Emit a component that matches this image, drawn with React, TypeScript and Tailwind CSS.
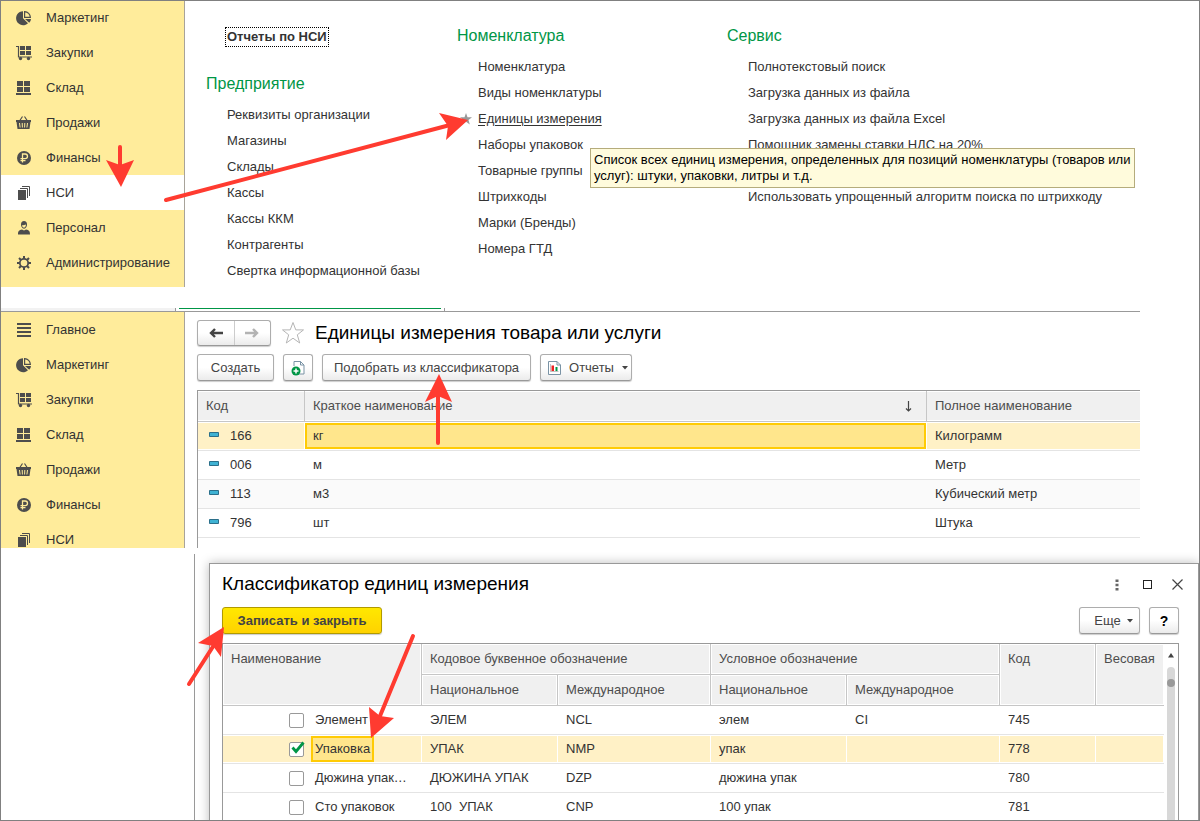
import type { ReactNode } from 'react'

const icons: Record<string, ReactNode> = {
  main: <path d="M1 2h14M1 6h14M1 10h14M1 14h14" stroke="#4d4d4d" strokeWidth="2" />,
  marketing: (
    <>
      <path d="M7 1.2v7l5 5A7 7 0 1 1 7 1.2z" fill="#4d4d4d" />
      <path d="M8.6 1.6a6 6 0 0 1 5.8 5.8H8.6z" fill="none" stroke="#4d4d4d" strokeWidth="1.2" />
      <path d="M9 9h6a6 6 0 0 1-1.8 3.8z" fill="#4d4d4d" />
    </>
  ),
  purchases: (
    <>
      <path d="M0 1.5h2.5v10.500h13.500" fill="none" stroke="#4d4d4d" strokeWidth="1.2" />
      <path d="M4 1h5v4H4zM10 1h5v4h-5zM4 6h5v4H4zM10 6h5v4h-5z" fill="#4d4d4d" />
      <circle cx="4.500" cy="13.500" r="1.700" fill="#4d4d4d" />
      <circle cx="12.500" cy="13.500" r="1.700" fill="#4d4d4d" />
    </>
  ),
  stock: <path d="M1 1h6v5H1zM8 1h6v5H8zM1 7h6v5H1zM8 7h6v5H8zM0 13h15v2H0z" fill="#4d4d4d" />,
  sales: (
    <>
      <path d="M3.500 6l3-4.500M11.500 6l-3-4.500" stroke="#4d4d4d" strokeWidth="1.200" />
      <path d="M0 5h15v2h-.5L13.500 14h-12L.5 7H0z" fill="#4d4d4d" />
      <path d="M3.500 8l.6 4.500M6.200 8l.2 4.500M8.800 8l-.2 4.500M11.500 8l-.6 4.500" stroke="#ffec9b" strokeWidth="1" />
    </>
  ),
  finance: (
    <>
      <circle cx="8" cy="8" r="7" fill="#4d4d4d" />
      <path d="M6.500 12.500V4h2.700a2.200 2.200 0 0 1 0 4.600H4.500M4.500 10.600h5" fill="none" stroke="#ffec9b" strokeWidth="1.300" />
    </>
  ),
  nsi: (
    <>
      <path d="M2 5h8v10H2z" fill="#4d4d4d" />
      <path d="M4 3.500h7.500V13M6 1.500h7.500V11" fill="none" stroke="#4d4d4d" />
    </>
  ),
  staff: (
    <>
      <path d="M5 4.500a3 3.500 0 0 1 6 0c0 2-1.200 4.200-3 4.200S5 6.500 5 4.500z" fill="#4d4d4d" />
      <path d="M6 5.200c1.500 0 3-.4 4-.8-.1 1.800-.9 3.200-2 3.200S6.200 6.600 6 5.200z" fill="#ffec9b" />
      <path d="M2 14.500c0-3.500 1-4.500 4-5l2 1 2-1c3 .5 4 1.500 4 5z" fill="#4d4d4d" />
    </>
  ),
  admin: (
    <>
      <circle cx="8" cy="8" r="4.200" fill="none" stroke="#4d4d4d" strokeWidth="1.800" />
      <path d="M8 1v3M8 12v3M1 8h3M12 8h3M3 3l2.200 2.200M10.800 10.800L13 13M3 13l2.200-2.200M10.800 5.200L13 3" stroke="#4d4d4d" strokeWidth="2" />
    </>
  ),
}

const sections = [
  { icon: 'marketing', label: 'Маркетинг' },
  { icon: 'purchases', label: 'Закупки' },
  { icon: 'stock', label: 'Склад' },
  { icon: 'sales', label: 'Продажи' },
  { icon: 'finance', label: 'Финансы' },
  { icon: 'nsi', label: 'НСИ' },
  { icon: 'staff', label: 'Персонал' },
  { icon: 'admin', label: 'Администрирование' },
]

function Sidebar({ items, active }: { items: typeof sections; active?: string }) {
  return (
    <nav className="w-[185px] shrink-0 overflow-hidden border-r border-[#a8a39a] bg-[#ffec9b]">
      {items.map((s) => (
        <a key={s.label} href="#"
          className={`flex h-[35px] items-center gap-[14px] pl-4 ${s.label === active ? 'bg-white' : ''}`}>
          <svg viewBox="0 0 16 16" className="size-4 shrink-0">{icons[s.icon]}</svg>
          {s.label}
        </a>
      ))}
    </nav>
  )
}

function LinkGroup({ title, children }: { title: string; children: ReactNode }) {
  return (
    <section>
      <h2 className="mb-1 text-base leading-7 text-[#009646]">{title}</h2>
      <ul className="pl-[21px]">{children}</ul>
    </section>
  )
}

function Item({ children }: { children: ReactNode }) {
  return <li className="h-[26px] leading-[26px] whitespace-nowrap"><a href="#">{children}</a></li>
}

const btn = 'flex items-center justify-center rounded-[3px] border border-[#adadad] border-b-[#999] bg-linear-to-b from-white from-50% to-[#ebebeb] shadow-[0_1px_1px_#ccc] text-[#444]'

function Caret() {
  return <svg viewBox="0 0 6 4" className="h-1 w-1.5"><path d="M0 0h6L3 3.500z" fill="#444" /></svg>
}

const units = [
  { code: '166', short: 'кг', full: 'Килограмм' },
  { code: '006', short: 'м', full: 'Метр' },
  { code: '113', short: 'м3', full: 'Кубический метр' },
  { code: '796', short: 'шт', full: 'Штука' },
]

function UnitsTable() {
  const th = 'h-[31px] border-b border-[#c6c6c6] p-0 text-left font-normal'
  const head = 'flex h-7 items-center bg-[#f0f0f0] px-2'
  return (
    <table className="w-full table-fixed border-separate border-spacing-0">
      <colgroup>
        <col className="w-[107px]" />
        <col className="w-[622px]" />
        <col />
      </colgroup>
      <thead className="text-[#4d4d4d]">
        <tr>
          <th className={`${th} border-r`}><div className={head}>Код</div></th>
          <th className={`${th} border-r`}>
            <div className={`${head} justify-between`}>
              Краткое наименование
              <svg viewBox="0 0 7 11" className="mr-1.5 h-[11px] w-[7px]">
                <path d="M3.500 0v10M1 7.500l2.500 2.500L6 7.500" fill="none" stroke="#444" strokeWidth="1.200" />
              </svg>
            </div>
          </th>
          <th className={th}><div className={head}>Полное наименование</div></th>
        </tr>
      </thead>
      <tbody>
        {units.map((u, i) => {
          const td = 'h-[29px] border-b border-[#e4e4e4] p-0'
          const row = i === 0 ? 'bg-[#fff1c6]' : ''
          return (
            <tr key={u.code} className={i === 2 ? 'bg-[#fafafa]' : ''}>
              <td className={td}>
                <div className={`mr-px flex h-[26px] items-center gap-[11px] pl-[11px] ${row}`}>
                  <svg viewBox="0 0 10 5" className="mb-1 h-[5px] w-[10px]">
                    <path d="M.5.5h9v4h-9z" fill="#3fb2d3" stroke="#2b6f8a" />
                  </svg>
                  {u.code}
                </div>
              </td>
              <td className={td}>
                <div className={`mr-px flex h-[26px] items-center border-2 px-1.5 ${i === 0 ? 'border-[#ffcb05] bg-[#ffe68c]' : 'border-transparent'}`}>
                  {u.short}
                </div>
              </td>
              <td className={td}>
                <div className={`flex h-[26px] items-center px-2 ${row}`}>{u.full}</div>
              </td>
            </tr>
          )
        })}
      </tbody>
    </table>
  )
}

const classifier = [
  { name: 'Элемент', nat: 'ЭЛЕМ', int: 'NCL', cond: 'элем', condInt: 'CI', code: '745' },
  { name: 'Упаковка', nat: 'УПАК', int: 'NMP', cond: 'упак', condInt: '', code: '778' },
  { name: 'Дюжина упак…', nat: 'ДЮЖИНА УПАК', int: 'DZP', cond: 'дюжина упак', condInt: '', code: '780' },
  { name: 'Сто упаковок', nat: '100  УПАК', int: 'CNP', cond: '100 упак', condInt: '', code: '781' },
]

function ClassifierTable() {
  const th = 'h-[31px] border-r border-b border-[#c6c6c6] p-0 text-left align-top font-normal'
  const head = 'm-px flex h-7 items-center bg-[#f0f0f0] px-[7px] whitespace-nowrap'
  const tall = 'm-px h-[59px] bg-[#f0f0f0] px-[7px] leading-7'
  return (
    <table className="min-w-0 flex-1 table-fixed border-separate border-spacing-0">
      <colgroup>
        <col className="w-[199px]" />
        <col className="w-[136px]" />
        <col className="w-[153px]" />
        <col className="w-[136px]" />
        <col className="w-[153px]" />
        <col className="w-[96px]" />
        <col />
      </colgroup>
      <thead className="text-[#4d4d4d]">
        <tr>
          <th rowSpan={2} className={th}><div className={tall}>Наименование</div></th>
          <th colSpan={2} className={th}><div className={head}>Кодовое буквенное обозначение</div></th>
          <th colSpan={2} className={th}><div className={head}>Условное обозначение</div></th>
          <th rowSpan={2} className={th}><div className={tall}>Код</div></th>
          <th rowSpan={2} className={`${th} border-r-0`}><div className={tall}>Весовая</div></th>
        </tr>
        <tr>
          {['Национальное', 'Международное', 'Национальное', 'Международное'].map((t, i) => (
            <th key={i} className={th}><div className={head}>{t}</div></th>
          ))}
        </tr>
      </thead>
      <tbody>
        {classifier.map((r, i) => {
          const selected = i === 1
          const td = 'h-[29px] border-b border-[#e4e4e4] p-0'
          const cell = `mr-px flex h-[26px] items-center whitespace-pre pl-2 ${selected ? 'bg-[#fff1c6]' : ''}`
          return (
            <tr key={r.code}>
              <td className={td}>
                <label className={`mr-px flex h-[26px] items-center gap-[7px] pl-[66px] ${selected ? 'bg-[#fff1c6]' : ''}`}>
                  <span className="relative size-[15px] shrink-0">
                    <input type="checkbox" defaultChecked={selected}
                      className="peer block size-[15px] appearance-none rounded-[2px] border border-[#999] bg-white" />
                    <svg viewBox="0 0 14 13" className="pointer-events-none absolute -top-px left-0.5 hidden h-[13px] w-[14px] peer-checked:block">
                      <path d="M1.500 6.500l3.500 4L12.500 1.500" fill="none" stroke="#009646" strokeWidth="2.800" />
                    </svg>
                  </span>
                  <span className={`flex h-[26px] items-center border-2 px-0.5 whitespace-nowrap ${selected ? 'border-[#ffcb05] bg-[#ffe68c]' : 'border-transparent'}`}>
                    {r.name}
                  </span>
                </label>
              </td>
              {[r.nat, r.int, r.cond, r.condInt, r.code, ''].map((v, j) => (
                <td key={j} className={td}><div className={cell}>{v}</div></td>
              ))}
            </tr>
          )
        })}
      </tbody>
    </table>
  )
}

const arrows = [
  { line: 'M120 147V166', head: '121,187 106,160 120,165 134,160' },
  { line: 'M166 200L450 125', head: '468,120 439,113 448,126 446,140' },
  { line: 'M438 443L438 396', head: '439,374 452,402 438,396 425,402' },
  { line: 'M189 684L214 645', head: '224,627 221,657 213,646 198,643' },
  { line: 'M413 636L380 716', head: '371,738 394,718 380,716 369,707' },
]

export default function App() {
  return (
    <div className="relative flex h-screen flex-col overflow-hidden bg-white font-['Liberation_Sans',Arial,sans-serif] text-[13px] text-[#333]">
      {/* Functions panel of the section */}
      <div className="flex h-[287px] shrink-0">
        <Sidebar items={sections} active="НСИ" />
        <main className="flex pl-[21px]">
          <div className="w-[251px] pt-[27px]">
            <a href="#" className="ml-[19px] inline-block border border-dotted border-black px-px leading-[18px] font-bold whitespace-nowrap">
              Отчеты по НСИ
            </a>
            <div className="pt-[23px]">
              <LinkGroup title="Предприятие">
                {['Реквизиты организации', 'Магазины', 'Склады', 'Кассы', 'Кассы ККМ', 'Контрагенты', 'Свертка информационной базы'].map((t) => (
                  <Item key={t}>{t}</Item>
                ))}
              </LinkGroup>
            </div>
          </div>
          <div className="w-[270px] pt-[22px]">
            <LinkGroup title="Номенклатура">
              <Item>Номенклатура</Item>
              <Item>Виды номенклатуры</Item>
              <li className="relative h-[26px] leading-[26px] whitespace-nowrap">
                <svg viewBox="0 0 12 12" className="absolute top-[7px] -left-[18px] size-3">
                  <path d="M6 0l1.500 4.200H12L8.500 7l1.300 4.500L6 8.800 2.200 11.500 3.500 7 0 4.200h4.500z" fill="#999" />
                </svg>
                <a href="#" className="underline underline-offset-2">Единицы измерения</a>
                <div role="tooltip"
                  className="absolute top-[42px] left-[112px] z-10 w-[545px] border border-[#b5ac7c] bg-[#fffbdc] py-[3px] pl-[3px] leading-4 whitespace-normal text-black">
                  Список всех единиц измерения, определенных для позиций номенклатуры (товаров или услуг): штуки, упаковки, литры и т.д.
                </div>
              </li>
              {['Наборы упаковок', 'Товарные группы', 'Штрихкоды', 'Марки (Бренды)', 'Номера ГТД'].map((t) => (
                <Item key={t}>{t}</Item>
              ))}
            </LinkGroup>
          </div>
          <div className="pt-[22px]">
            <LinkGroup title="Сервис">
              {['Полнотекстовый поиск', 'Загрузка данных из файла', 'Загрузка данных из файла Excel', 'Помощник замены ставки НДС на 20%'].map((t) => (
                <Item key={t}>{t}</Item>
              ))}
              <li className="pt-[26px] leading-[26px]"><a href="#">Использовать упрощенный алгоритм поиска по штрихкоду</a></li>
            </LinkGroup>
          </div>
        </main>
      </div>

      {/* Bottom edge of the open tabs */}
      <div className="mt-[21px] mr-[60px] flex h-1 shrink-0 border-b border-[#999]">
        <div className="w-[176px] border-r border-[#999] bg-[#f2f2f2]" />
        <div className="ml-[3px] h-px w-[262px] bg-[#009646]" />
        <div className="ml-[3px] flex-1 border-l border-[#999]" />
      </div>

      {/* List of units */}
      <div className="flex h-[236px] shrink-0 overflow-hidden">
        <Sidebar items={[{ icon: 'main', label: 'Главное' }, ...sections.slice(0, 6)]} />
        <main className="mr-[60px] flex flex-1 flex-col pt-2 pl-3">
          <div className="flex h-[26px] items-center">
            <div className={`${btn} h-[26px] w-[74px]`}>
              <button aria-label="Назад" className="flex h-full flex-1 items-center justify-center border-r border-[#ccc]">
                <svg viewBox="0 0 14 10" className="h-[10px] w-[14px]">
                  <path d="M14 5H2M6 1L2 5l4 4" fill="none" stroke="#444" strokeWidth="2.400" />
                </svg>
              </button>
              <button aria-label="Вперед" className="flex h-full flex-1 items-center justify-center">
                <svg viewBox="0 0 14 10" className="h-[10px] w-[14px]">
                  <path d="M0 5h12M8 1l4 4-4 4" fill="none" stroke="#b3b3b3" strokeWidth="2.400" />
                </svg>
              </button>
            </div>
            <svg viewBox="0 0 24 24" className="ml-[10px] size-6">
              <path d="M12 1.500l2.800 7.400h7.700l-6.200 4.900 2.400 8.200L12 17.200 5.300 22l2.400-8.200-6.200-4.900h7.700z" fill="white" stroke="#b5b5b5" />
            </svg>
            <h1 className="ml-[10px] text-[19px] whitespace-nowrap text-black">Единицы измерения товара или услуги</h1>
          </div>
          <div className="mt-2 flex h-[27px] shrink-0">
            <button className={`${btn} w-[77px]`}>Создать</button>
            <button aria-label="Создать копированием" className={`${btn} ml-[9px] w-[30px]`}>
              <svg viewBox="0 0 16 16" className="size-4">
                <path d="M4 6V1.500h6.500l3.500 3.500v9H9" fill="#fff" stroke="#7a93a5" />
                <path d="M10.500 1.500V5H14" fill="none" stroke="#7a93a5" />
                <circle cx="6" cy="11" r="4.500" fill="#009646" />
                <path d="M6 8.500v5M3.500 11h5" stroke="#fff" strokeWidth="1.500" />
              </svg>
            </button>
            <button className={`${btn} ml-[9px] w-[209px] border-[#777]`}>Подобрать из классификатора</button>
            <button className={`${btn} ml-[9px] w-[92px] gap-2 pl-1`}>
              <svg viewBox="0 0 13 14" className="h-[14px] w-[13px]">
                <path d="M.5.5h8.500l3.500 3.500v9.500H.5z" fill="#fff" stroke="#7a93a5" />
                <path d="M9 .5V4h3.500" fill="none" stroke="#7a93a5" />
                <path d="M2.500 3v7.500h8" fill="none" stroke="#999" strokeWidth=".6" />
                <path d="M3.500 4.500H6V10H3.500z" fill="#e22" />
                <path d="M7.500 6H9.500v4h-2z" fill="#009646" />
              </svg>
              <span>Отчеты</span>
              <Caret />
            </button>
          </div>
          <div className="mt-[9px] flex-1 overflow-hidden border-t border-l border-[#999]">
            <UnitsTable />
          </div>
        </main>
      </div>

      {/* Classifier dialog */}
      <div className="mt-1.5 ml-[194px] flex flex-1 border-l border-[#999] pt-[9px] pr-px pl-[14px]">
        <div role="dialog" aria-labelledby="classifier-title"
          className="flex h-[280px] min-w-0 flex-1 flex-col border border-[#999] bg-white pr-[19px] pl-3 shadow-[0_0_10px_#0004]">
          <div className="flex h-[43px] shrink-0 items-center pb-0.5">
            <h2 id="classifier-title" className="flex-1 text-[19px] text-black">Классификатор единиц измерения</h2>
            <div className="-mr-1 flex items-center gap-5">
              <button aria-label="Меню">
                <svg viewBox="0 0 4 12" className="h-3 w-1">
                  <path d="M.5.5h3v2.500h-3zM.5 4.800h3v2.500h-3zM.5 9h3v2.500h-3z" fill="#666" />
                </svg>
              </button>
              <button aria-label="Развернуть" className="ml-1 size-[9px] border border-[#222]" />
              <button aria-label="Закрыть">
                <svg viewBox="0 0 11 11" className="size-[11px]">
                  <path d="M.5.5l10 10M10.500.5l-10 10" stroke="#444" strokeWidth="1.200" />
                </svg>
              </button>
            </div>
          </div>
          <div className="flex h-[27px] shrink-0">
            <button className="w-[160px] rounded-[3px] border border-[#b19a00] bg-linear-to-b from-[#ffe800] to-[#ffd200] font-bold text-[#444] shadow-[0_1px_1px_#ccc]">
              Записать и закрыть
            </button>
            <button className={`${btn} ml-auto w-[61px] gap-1.5 pl-2`}>Еще <Caret /></button>
            <button aria-label="Справка" className={`${btn} ml-[9px] w-[30px] text-sm font-bold text-black`}>?</button>
          </div>
          <div className="mt-[9px] flex flex-1 items-start border-x border-t border-[#999]">
            <ClassifierTable />
            <div className="flex w-[14px] shrink-0 flex-col items-center self-stretch pt-[9px]">
              <svg viewBox="0 0 6 5" className="h-[5px] w-1.5"><path d="M3 0l3 4.500H0z" fill="#444" /></svg>
              <div className="mt-[9px] flex w-2 flex-1 justify-center rounded-t-full bg-[#d8d8d8] pt-3">
                <div className="size-2 rounded-full bg-[#999]" />
              </div>
            </div>
          </div>
        </div>
      </div>

      {/* Callout arrows over the windows */}
      <svg viewBox="0 0 1200 821" className="pointer-events-none absolute top-0 left-0 z-20 h-[821px] w-[1200px]">
        {arrows.map((a) => (
          <g key={a.line}>
            <path d={a.line} stroke="#ff3b30" strokeWidth="4" strokeLinecap="round" />
            <polygon points={a.head} fill="#ff3b30" />
          </g>
        ))}
      </svg>
      <div className="pointer-events-none absolute inset-0 z-30 border border-[#808080]" />
    </div>
  )
}
